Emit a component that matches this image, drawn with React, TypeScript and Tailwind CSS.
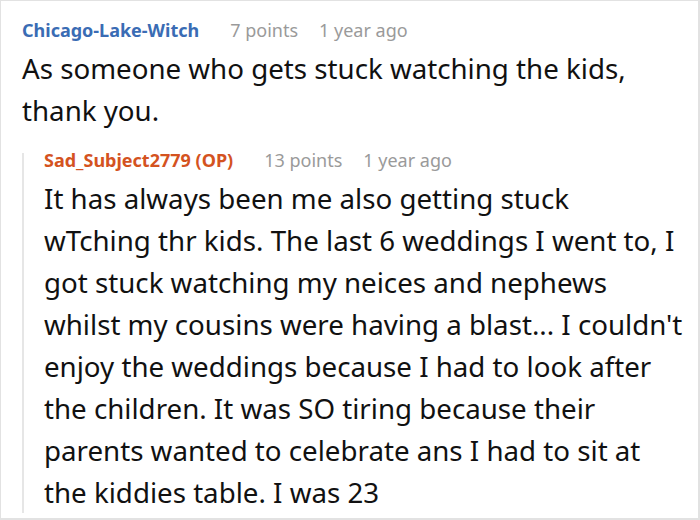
import React from "react";

type Comment = {
	author: string;
	op?: boolean;
	points: number;
	age: string;
	lines: string[];
};

const parent: Comment = {
	author: "Chicago-Lake-Witch",
	points: 7,
	age: "1 year ago",
	lines: ["As someone who gets stuck watching the kids,", "thank you."],
};

const reply: Comment = {
	author: "Sad_Subject2779 (OP)",
	op: true,
	points: 13,
	age: "1 year ago",
	lines: [
		"It has always been me also getting stuck",
		"wTching thr kids. The last 6 weddings I went to, I",
		"got stuck watching my neices and nephews",
		"whilst my cousins were having a blast... I couldn't",
		"enjoy the weddings because I had to look after",
		"the children. It was SO tiring because their",
		"parents wanted to celebrate ans I had to sit at",
		"the kiddies table. I was 23",
	],
};

function Meta({ c, className }: { c: Comment; className: string }) {
	return (
		<div className={`flex items-baseline ${className}`}>
			<span className={`font-bold text-[18px] ${c.op ? "text-[#d4531f]" : "text-[#3a6cb4]"}`}>{c.author}</span>
			<span className="ml-[31px] text-[18px] text-[#9a9a9a]">{c.points} points</span>
			<span className="ml-[21px] text-[18px] text-[#9a9a9a]">{c.age}</span>
		</div>
	);
}

function Body({ lines, className }: { lines: string[]; className: string }) {
	return (
		<p className={`text-[27.7px] leading-[42px] whitespace-nowrap ${className}`}>
			{lines.map((l, i) => (
				<React.Fragment key={i}>
					{l}
					{i < lines.length - 1 && <br />}
				</React.Fragment>
			))}
		</p>
	);
}

export default function App() {
	return (
		<div
			className="w-[700px] h-[520px] overflow-hidden bg-white border border-r-2 border-b-2 border-[#e2e2e2] text-[#111] pl-[21px] pr-[8px] pt-[17px]"
			style={{ fontFamily: '"Noto Sans", "Open Sans", sans-serif' }}
		>
			<Meta c={parent} className="leading-[24px]" />
			<Body lines={parent.lines} className="mt-[5px]" />
			<div className="mt-[22px] border-l-2 border-[#e6e6e6] pl-[20px]">
				<Meta c={reply} className="leading-[14px]" />
				<Body lines={reply.lines} className="mt-[10px]" />
			</div>
		</div>
	);
}
